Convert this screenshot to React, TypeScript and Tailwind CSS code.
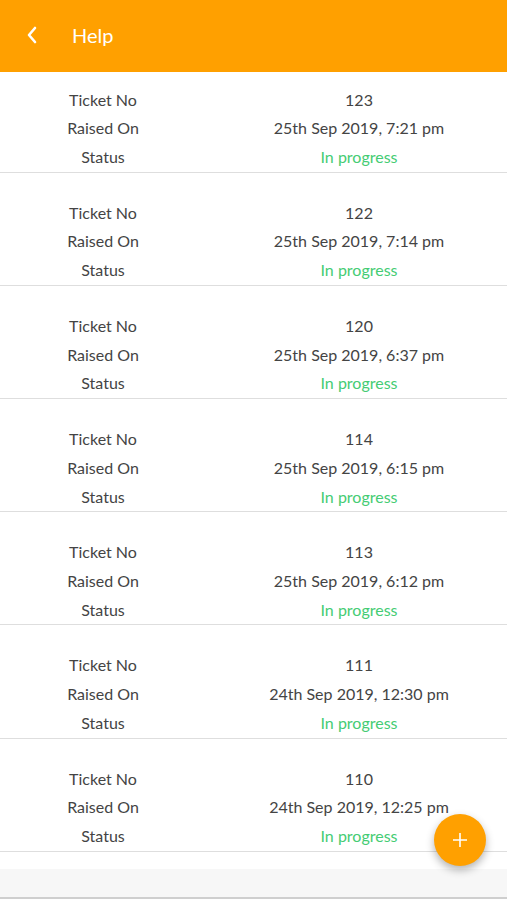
import React from "react";

const tickets = [
  { no: "123", date: "25th Sep 2019, 7:21 pm" },
  { no: "122", date: "25th Sep 2019, 7:14 pm" },
  { no: "120", date: "25th Sep 2019, 6:37 pm" },
  { no: "114", date: "25th Sep 2019, 6:15 pm" },
  { no: "113", date: "25th Sep 2019, 6:12 pm" },
  { no: "111", date: "24th Sep 2019, 12:30 pm" },
  { no: "110", date: "24th Sep 2019, 12:25 pm" },
];

export default function App() {
  return (
    <div
      className="relative w-[507px] h-[900px] overflow-hidden bg-white"
      style={{ fontFamily: "Lato, 'Open Sans', sans-serif" }}
    >
      <header className="h-[72px] bg-[#ffa000] flex items-center pb-[3px]">
        <svg className="ml-[26px] w-[12px] h-[18px]" viewBox="0 0 12 18" fill="none">
          <path d="M9 2 L3 9 L9 16" stroke="#fff" strokeWidth="2.6" strokeLinecap="round" strokeLinejoin="round" />
        </svg>
        <span className="ml-[34px] text-white text-[20px]">Help</span>
      </header>
      <div className="flex flex-col">
        {tickets.map((t, i) => (
          <div
            key={t.no}
            className={`flex border-b border-[#dedede] text-[16px] leading-[28.72px] text-[#444] ${i === 0 ? "pt-[13.6px]" : "pt-[26px]"}`}
          >
            <div className="w-[206px] flex flex-col items-center">
              <span>Ticket No</span>
              <span>Raised On</span>
              <span>Status</span>
            </div>
            <div className="ml-[5px] w-[296px] flex flex-col items-center">
              <span>{t.no}</span>
              <span>{t.date}</span>
              <span className="text-[#45cc74]">In progress</span>
            </div>
          </div>
        ))}
      </div>
      <div className="mt-[17px] h-[30px] bg-[#f7f7f7] border-b-2 border-[#cfcfcf]" />
      <button className="absolute left-[434px] top-[814px] w-[52px] h-[52px] rounded-full bg-[#ffa000] flex items-center justify-center shadow-[0_4px_8px_rgba(0,0,0,0.3)]">
        <svg className="w-[14px] h-[14px]" viewBox="0 0 14 14">
          <path d="M7 0 V14 M0 7 H14" stroke="#fff" strokeWidth="1.6" />
        </svg>
      </button>
    </div>
  );
}
